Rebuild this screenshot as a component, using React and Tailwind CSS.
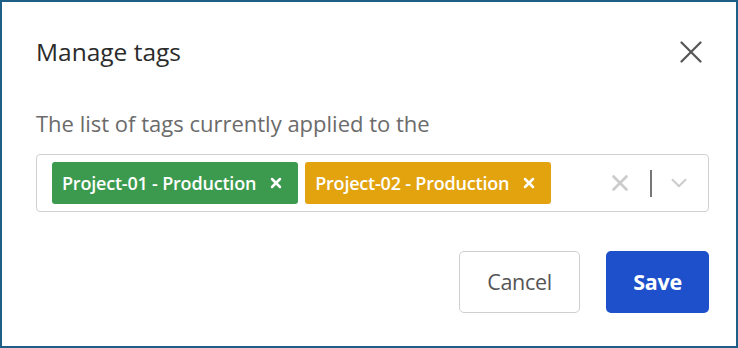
import React from 'react';
import { X, ChevronDown } from 'lucide-react';

const tags = [
  { label: 'Project-01 - Production', color: 'bg-[#3c9a4f]' },
  { label: 'Project-02 - Production', color: 'bg-[#e2a30f]' },
];

const App = () => {
  return (
    <div className="w-[738px] h-[348px] bg-white border-2 border-[#1d5f86] font-['Open_Sans',sans-serif] flex flex-col pl-[34px] pr-[27px]">
      {/* header */}
      <div className="flex items-center justify-between pt-[33px]">
        <h1 className="text-[24.5px] text-[#2b2b2b] leading-[34px]">Manage tags</h1>
        <button className="text-[#555] mr-[7px]">
          <svg width="22" height="22" viewBox="0 0 22 22" fill="none" stroke="currentColor" strokeWidth="2.2" strokeLinecap="round">
            <path d="M1.5 1.5 20.5 20.5M20.5 1.5 1.5 20.5" />
          </svg>
        </button>
      </div>

      <p className="mt-[40px] text-[22px] text-[#6b6b6b] leading-[28px]">
        The list of tags currently applied to the
      </p>

      {/* tag select */}
      <div className="mt-[17px] h-[58px] border border-[#d0d0d0] rounded-[4px] flex items-center pl-[15px] pr-[16px]">
        <div className="flex items-center gap-[7px] flex-1">
          {tags.map((t) => (
            <div
              key={t.label}
              className={`${t.color} h-[42px] rounded-[3px] flex items-center pl-[10px] pr-[14px] text-white text-[18px] font-semibold tracking-[-0.2px]`}
            >
              <span>{t.label}</span>
              <X size={16} strokeWidth={3.8} className="ml-[12px]" />
            </div>
          ))}
        </div>
        <X size={26} strokeWidth={2.5} className="text-[#cccccc]" />
        <div className="w-[2px] h-[27px] bg-[#777] ml-[17px] mr-[14px]" />
        <ChevronDown size={26} strokeWidth={1.8} className="text-[#cccccc]" />
      </div>

      {/* footer */}
      <div className="flex justify-end gap-[26px] mt-[39px]">
        <button className="w-[121px] h-[62px] border border-[#cfcfcf] rounded-[5px] text-[21.5px] text-[#555] tracking-[-0.3px]">
          Cancel
        </button>
        <button className="w-[103px] h-[62px] bg-[#1e50cc] rounded-[5px] text-[21.5px] text-white font-bold tracking-[-0.3px]">
          Save
        </button>
      </div>
    </div>
  );
};

export default App;
